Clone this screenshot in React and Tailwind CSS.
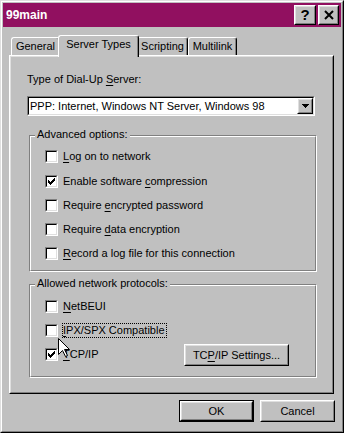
import React from "react";

const Raised = ({ className = "", inner = "", children }) => (
  <div className={"border border-t-white border-l-white border-r-black border-b-black " + className}>
    <div className={"w-full h-full border border-t-[#dfdfdf] border-l-[#dfdfdf] border-r-[#808080] border-b-[#808080] bg-[#c0c0c0] " + inner}>
      {children}
    </div>
  </div>
);

const Check = () => (
  <svg width="7" height="7" viewBox="0 0 7 7" shapeRendering="crispEdges">
    <path
      fill="#000"
      d="M6 0h1v3H6zM5 1h1v3H5zM4 2h1v3H4zM0 2h1v3H0zM1 3h1v3H1zM2 4h1v3H2zM3 3h1v3H3z"
    />
  </svg>
);

const CheckBox = ({ checked }) => (
  <div className="w-[13px] h-[13px] shrink-0 border border-t-[#808080] border-l-[#808080] border-r-white border-b-white">
    <div className="w-full h-full border border-t-black border-l-black border-r-[#dfdfdf] border-b-[#dfdfdf] bg-white flex items-center justify-center">
      {checked && <Check />}
    </div>
  </div>
);

const U = ({ children }) => <span className="underline underline-offset-[2px] decoration-1">{children}</span>;

const Row = ({ checked, children, h = "h-[24px]", focus }) => (
  <div className={"flex " + h}>
    <CheckBox checked={checked} />
    {focus ? (
      <span className="ml-[4px] h-[15px] -mt-px leading-[13px] border border-dotted border-black pr-[1px] whitespace-nowrap">{children}</span>
    ) : (
      <span className="ml-[5px] leading-[13px] whitespace-nowrap">{children}</span>
    )}
  </div>
);

const Group = ({ title, className = "", pt, children }) => (
  <div className={"relative border border-t-[#808080] border-l-[#808080] border-r-white border-b-white " + className}>
    <div className={"w-full h-full border border-t-white border-l-white border-r-[#808080] border-b-[#808080] pl-[14px] " + pt}>
      {children}
    </div>
    <span className="absolute left-[5px] -top-[8px] px-[2px] bg-[#c0c0c0] leading-[13px] whitespace-nowrap">{title}</span>
  </div>
);

const Tab = ({ label, w, selected }) =>
  selected ? (
    <div
      className={"relative z-10 -mx-[2px] -mb-[2px] h-[22px] bg-[#c0c0c0] border-l border-t border-white border-r border-r-black rounded-t-[3px] shadow-[inset_-1px_0_0_#808080] flex justify-center pt-[2px] " + w}
    >
      <span className="leading-[13px]">{label}</span>
    </div>
  ) : (
    <div
      className={"h-[18px] bg-[#c0c0c0] border-l border-t border-white border-r border-r-black rounded-t-[3px] shadow-[inset_-1px_0_0_#808080] flex justify-center pt-[2px] " + w}
    >
      <span className="leading-[13px]">{label}</span>
    </div>
  );

export default function App() {
  return (
    <div className="relative w-[344px] h-[433px] bg-[#c0c0c0] border border-t-[#dfdfdf] border-l-[#dfdfdf] border-r-black border-b-black font-['Liberation_Sans',Arial,sans-serif] text-[11px] text-black select-none">
      <div className="w-full h-full border border-t-white border-l-white border-r-[#808080] border-b-[#808080] p-px flex flex-col">
        {/* Title bar */}
        <div className="h-[24px] bg-[#911060] flex items-center pl-[3px] pr-[2px]">
          <span className="text-white font-bold text-[12px] leading-[14px]">99main</span>
          <div className="ml-auto flex gap-[2px]">
            <Raised className="w-[22px] h-[20px]" inner="flex items-center justify-center">
              <span className="font-bold text-[15px] leading-[15px] -mt-px">?</span>
            </Raised>
            <Raised className="w-[21px] h-[20px]" inner="flex items-center justify-center">
              <svg width="10" height="10" viewBox="0 0 10 10">
                <path d="M1 1L9 9M9 1L1 9" stroke="#000" strokeWidth="2" />
              </svg>
            </Raised>
          </div>
        </div>

        {/* Tabs + page */}
        <div className="ml-[6px] w-[325px] mt-[8px]">
          <div className="h-[20px] flex items-end pl-[2px]">
            <Tab label="General" w="w-[49px]" />
            <Tab label="Server Types" w="w-[81px]" selected />
            <Tab label="Scripting" w="w-[51px]" />
            <Tab label="Multilink" w="w-[49px]" />
          </div>
          <Raised className="h-[339px]" inner="pl-[16px] pt-[16px]">
            <div className="leading-[13px]">
              Type of Dial-Up <U>S</U>erver:
            </div>
            {/* Combobox */}
            <div className="mt-[10px] w-[288px] h-[20px] border border-t-[#808080] border-l-[#808080] border-r-white border-b-white">
              <div className="w-full h-full border border-t-black border-l-black border-r-[#dfdfdf] border-b-[#dfdfdf] bg-white flex items-center">
                <span className="pl-px leading-[13px] whitespace-nowrap">PPP: Internet, Windows NT Server, Windows 98</span>
                <Raised className="ml-auto w-[16px] h-[16px]" inner="flex items-center justify-center">
                  <svg width="7" height="4" viewBox="0 0 7 4" shapeRendering="crispEdges">
                    <path d="M0 0h7v1H0zM1 1h5v1H1zM2 2h3v1H2zM3 3h1v1H3z" fill="#000" />
                  </svg>
                </Raised>
              </div>
            </div>

            <Group title="Advanced options:" className="mt-[19px] ml-[2px] w-[288px] h-[137px]" pt="pt-[13px]">
              <Row h="h-[25px]"><U>L</U>og on to network</Row>
              <Row checked>Enable software <U>c</U>ompression</Row>
              <Row>Require <U>e</U>ncrypted password</Row>
              <Row>Require <U>d</U>ata encryption</Row>
              <Row><U>R</U>ecord a log file for this connection</Row>
            </Group>

            <Group title="Allowed network protocols:" className="mt-[12px] ml-[2px] w-[288px] h-[94px]" pt="pt-[14px]">
              <Row><U>N</U>etBEUI</Row>
              <Row focus><U>I</U>PX/SPX Compatible</Row>
              <div className="flex h-[24px]">
                <CheckBox checked />
                <span className="ml-[5px] w-[121px] leading-[13px]"><U>T</U>CP/IP</span>
                <Raised className="-mt-[4px] w-[105px] h-[22px]" inner="flex items-center justify-center">
                  <span className="leading-[13px]">TC<U>P</U>/IP Settings...</span>
                </Raised>
              </div>
            </Group>
          </Raised>
        </div>

        {/* Buttons */}
        <div className="ml-[6px] w-[326px] mt-[6px] flex justify-end gap-[6px]">
          <div className="border border-black w-[75px] h-[22px]">
            <Raised className="w-full h-full" inner="flex items-center justify-center">
              <span className="leading-[13px]">OK</span>
            </Raised>
          </div>
          <Raised className="w-[75px] h-[22px]" inner="flex items-center justify-center">
            <span className="leading-[13px]">Cancel</span>
          </Raised>
        </div>
      </div>

      {/* Mouse cursor */}
      <svg className="absolute left-[57px] top-[337px]" width="13" height="20" viewBox="0 0 13 20">
        <path
          d="M0.5 0.5V16.5L4.5 12.5L7.5 18.5L9.5 17.5L6.5 11.5H11.5Z"
          fill="#fff"
          stroke="#000"
          strokeWidth="1"
          strokeLinejoin="miter"
        />
      </svg>
    </div>
  );
}
